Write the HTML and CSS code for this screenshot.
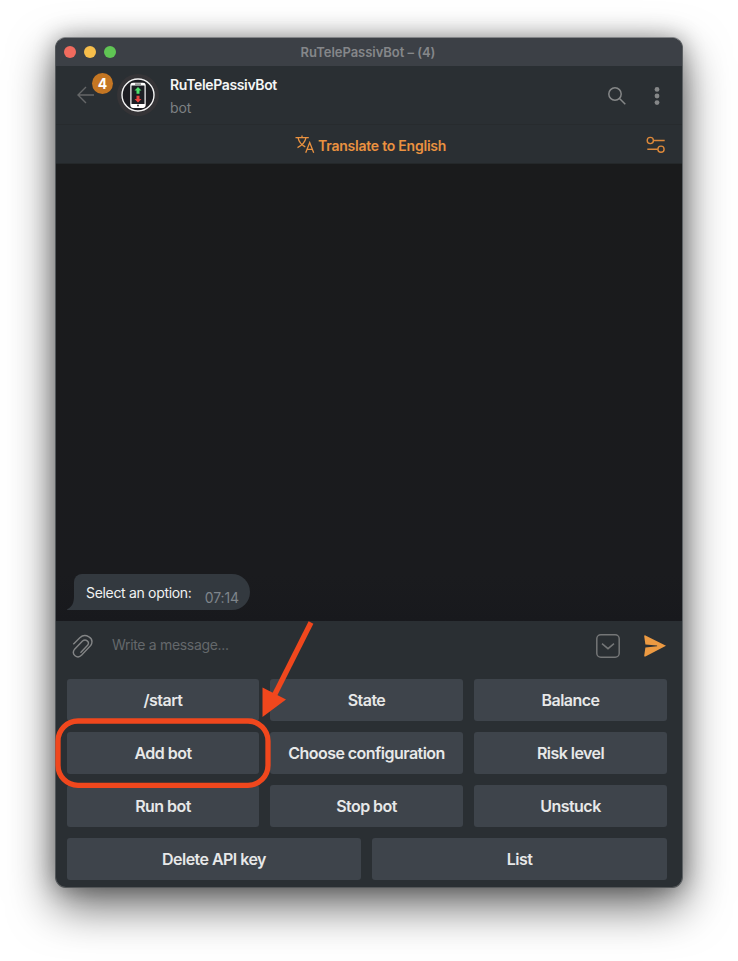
FILE: index.html
```html
<!DOCTYPE html>
<html lang="en">
<head>
<meta charset="utf-8">
<title>RuTelePassivBot</title>
<link rel="stylesheet" href="styles.css">
</head>
<body>
<main class="window">
  <div class="titlebar">
    <div class="lights"><i class="light red"></i><i class="light yellow"></i><i class="light green"></i></div>
    <span class="title">RuTelePassivBot – (4)</span>
  </div>
  <header class="header">
    <div class="back">
      <svg width="18" height="18" viewBox="0 0 18 18"><path d="M9 1 1 9l8 8M1 9h16" fill="none" stroke="#656768" stroke-width="1.4"/></svg>
      <span class="badge">4</span>
    </div>
    <svg class="avatar" width="42" height="42" viewBox="0 0 42 42">
      <circle cx="21" cy="21" r="21" fill="#353437"/>
      <circle cx="21" cy="21" r="16" fill="#1c1d22" stroke="#f4f4f4" stroke-width="1.4"/>
      <rect x="13.900" y="9.300" width="14.200" height="24" rx="2.200" fill="#1c1e24" stroke="#fff" stroke-width="1.200"/>
      <path d="M14 9.500h14v2H14zM14 30h14v3H14z" fill="#fff"/>
      <path d="M18 10.200h6" stroke="#777" stroke-width="1.200"/>
      <circle cx="21" cy="31.500" r="1" fill="#333"/>
      <path d="M21 12.900l3.500 3.600h-2v3.200h-3v-3.200h-2z" fill="#4ee16c"/>
      <path d="M21 28.600l3.500-3.600h-2v-3.200h-3v3.200h-2z" fill="#e84440"/>
    </svg>
    <div class="peer"><b class="name">RuTelePassivBot</b><span class="status">bot</span></div>
    <svg class="search" width="18" height="18" viewBox="0 0 18 18"><g fill="none" stroke="#858788" stroke-width="1.500"><circle cx="7" cy="7" r="6.200"/><path d="m11.500 11.500 5.800 5.800"/></g></svg>
    <svg class="more" width="6" height="20" viewBox="0 0 6 20" fill="#858788"><circle cx="3" cy="3.400" r="2.400"/><circle cx="3" cy="10" r="2.400"/><circle cx="3" cy="16.600" r="2.400"/></svg>
  </header>
  <div class="translate">
    <svg width="20" height="19" viewBox="0 0 20 19"><g fill="none" stroke="#ea9240" stroke-width="1.300"><path d="M.5 2.700h13.300M7 .4v2.300M3 2.700c.8 4.100 3.700 7.300 7.300 9.200M11 2.700C10.200 7 6.600 10.600 2.500 12.700"/><path d="m10.700 17.700 4-10.200 4 10.200M12 14.300h5.400"/></g></svg>
    <span class="translate-text">Translate to English</span>
    <svg class="settings" width="20" height="18" viewBox="0 0 20 18"><g fill="none" stroke="#dc883a" stroke-width="1.400"><circle cx="4.300" cy="4.500" r="3.100"/><path d="M7.400 4.500h11.300M1.300 13.200h10.500"/><circle cx="15" cy="13.200" r="3.100"/></g></svg>
  </div>
  <section class="chat">
    <div class="message">
      <svg class="tail" width="8" height="14" viewBox="0 0 8 14"><path d="M8 0v14H.5c-.6 0-.6-.7 0-1C5 11 7 7 7 0z" fill="#33393f"/></svg>
      <span class="message-text">Select an option:</span><time class="time">07:14</time>
    </div>
  </section>
  <div class="composer">
    <svg class="clip" width="22" height="25" viewBox="0 0 22 25"><path d="M1.300 10.200 7.800 3.800C13.300-1.300 23 4 18.800 11.400L9.700 21.100c-4.500 4.500-10.800-1-7.100-5.900l7.900-8.100c3.100-2.800 7.700.700 5.100 4.200l-7.100 7.400" fill="none" stroke="#838586" stroke-width="1.400"/></svg>
    <span class="placeholder">Write a message...</span>
    <svg class="toggle" width="24" height="24" viewBox="0 0 24 24"><g fill="none" stroke="#747677" stroke-width="1.500"><rect x=".8" y=".8" width="22.400" height="22.400" rx="4"/><path d="m6 9.700 6 5 6-5"/></g></svg>
    <svg class="send" width="23" height="22" viewBox="0 0 23 22"><path d="M1.400.4 22 10.700 1.400 21.500c-.8.300-1.300-.1-1.200-.8l1.200-8.200 11.700-1.200v-.7L1.400 9.400.2 1.200C.1.500.6.100 1.400.4z" fill="#ec9a42"/></svg>
  </div>
  <div class="keyboard">
    <div class="row three"><div class="key"><span>/start</span></div><div class="key"><span>State</span></div><div class="key"><span>Balance</span></div></div>
    <div class="row three"><div class="key"><span>Add bot</span></div><div class="key"><span>Choose configuration</span></div><div class="key"><span>Risk level</span></div></div>
    <div class="row three"><div class="key"><span>Run bot</span></div><div class="key"><span>Stop bot</span></div><div class="key"><span>Unstuck</span></div></div>
    <div class="row two"><div class="key"><span>Delete API key</span></div><div class="key"><span>List</span></div></div>
  </div>
</main>
<svg class="annotation" width="738" height="961" viewBox="0 0 738 961"><rect x="58" y="721" width="210" height="64.300" rx="20" fill="none" stroke="#f0471d" stroke-width="5.300"/><path d="M311 622.500 274 696" stroke="#f0471d" stroke-width="5.300"/><path d="M262.500 687.500v29.500l23.500-17.500z" fill="#f0471d"/></svg>
</body>
</html>
```

FILE: styles.css
```css
* { box-sizing: border-box; }
body { margin: 0; width: 738px; height: 961px; overflow: hidden; background: #fff; position: relative; font-family: Inter, "Liberation Sans", sans-serif; padding: 37px 55px; }
svg { display: block; flex: none; }
span, b, time { white-space: nowrap; }
.window { width: 628px; height: 851px; border: 1px solid; border-color: #828487 #5d6164 #55585a #54585b; border-radius: 11px; overflow: hidden; background: #2a2f33; display: flex; flex-direction: column; box-shadow: 0 18px 46px rgba(0,0,0,.6), 0 0 22px rgba(0,0,0,.3); }
.titlebar { height: 28px; flex: none; background: #3c4046; display: grid; grid-template-columns: 1fr auto 1fr; align-items: center; }
.lights { display: flex; gap: 8px; padding-left: 8px; }
.light { width: 12px; height: 12px; border-radius: 50%; }
.red { background: #f16b5e; } .yellow { background: #f7be4b; } .green { background: #60c554; }
.title { font-size: 13px; font-weight: 600; letter-spacing: -.04px; margin-right: 2px; color: #85878a; }
.header { height: 59px; flex: none; display: flex; align-items: center; padding: 0 22px 0 21px; border-bottom: 1px solid #272b2e; }
.back { position: relative; width: 41px; height: 18px; }
.badge { position: absolute; left: 15px; top: -13px; width: 21px; height: 21px; border-radius: 50%; background: #c47623; color: #fff; font-size: 14px; font-weight: 700; line-height: 21px; text-align: center; }
.avatar { margin-left: -1px; }
.peer { display: flex; flex-direction: column; margin-left: 11px; flex: 1; gap: 5px; align-items: flex-start; padding-top: 3px; }
.name { font-size: 14px; line-height: 18px; font-weight: 600; letter-spacing: -.36px; color: #f5f6f6; }
.status { font-size: 14px; line-height: 18px; letter-spacing: -.15px; color: #7d8184; }
.search { margin-top: 2px; }
.more { margin: 2px 0 0 28px; }
.translate { height: 39px; flex: none; display: flex; align-items: center; padding: 1px 0 0 239px; gap: 3px; border-bottom: 1px solid #24282a; }
.translate-text { font-size: 14px; font-weight: 600; letter-spacing: -.23px; padding-top: 2px; color: #ea9240; }
.settings { margin: 0 16px 0 auto; }
.chat { height: 457px; flex: none; background: linear-gradient(#1a1b1c, #1a1b1e 90%, #18191d); display: flex; align-items: flex-end; padding: 0 0 11px 18px; }
.message { position: relative; height: 36px; width: 176px; border-radius: 8px 18px 18px 0; background: #33393f; display: flex; align-items: center; justify-content: space-between; padding: 0 11px 0 12px; }
.tail { position: absolute; left: -7px; bottom: 0; }
.message-text { font-size: 14px; letter-spacing: -.32px; color: #f1f2f2; }
.time { font-size: 14px; letter-spacing: -.1px; color: #7f858b; padding-top: 10px; }
.composer { height: 58px; flex: none; display: flex; align-items: center; padding: 0 15px 8px 16px; }
.placeholder { margin-left: 18px; flex: 1; font-size: 14px; letter-spacing: -.32px; color: #64686b; padding-bottom: 3px; }
.send { margin-left: 24px; }
.keyboard { padding: 0 15px 0 11px; display: flex; flex-direction: column; gap: 11px; }
.row { display: grid; gap: 11px; }
.three { grid-template-columns: 192px 193px 193px; }
.two { grid-template-columns: 294px 295px; }
.key { height: 42px; background: #3e444b; border-radius: 3px; display: flex; align-items: center; justify-content: center; font-size: 16px; font-weight: 600; letter-spacing: -.54px; color: #e7e8e8; }
.annotation { position: absolute; left: 0; top: 0; }
```
